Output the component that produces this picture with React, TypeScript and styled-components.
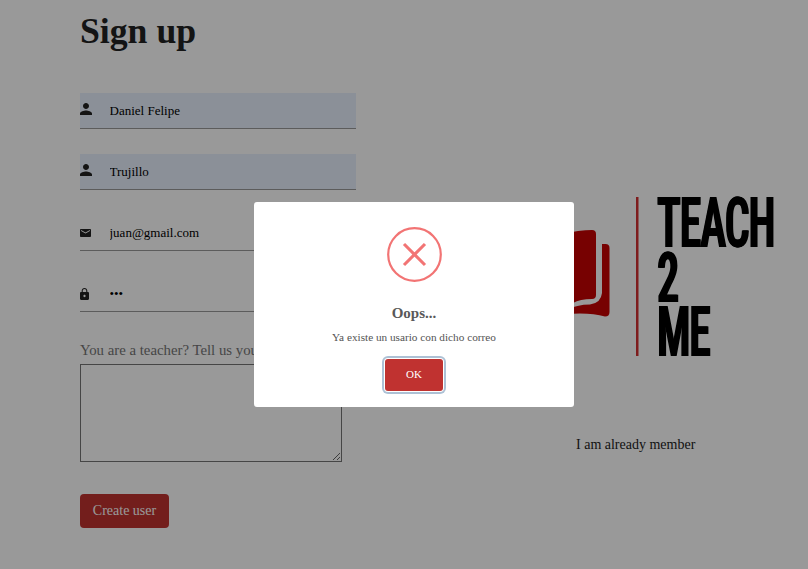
import React from "react";
import styled, { createGlobalStyle } from "styled-components";

const GlobalStyle = createGlobalStyle`
  *, *::before, *::after { box-sizing: border-box; }
  html, body, #root { height: 100%; }
  body {
    margin: 0;
    overflow: hidden;
    background: #fff;
    color: #222;
    font-family: "Liberation Serif", "Times New Roman", serif;
  }
`;

const Page = styled.main`
  display: flex;
  height: 100%;
  padding-left: 80px;
`;

const FormColumn = styled.form`
  width: 276px;
  flex: none;
  display: flex;
  flex-direction: column;
  align-items: flex-start;
`;

const Heading = styled.h1`
  margin: 0 0 31px;
  height: 62px;
  font-size: 35.7px;
  line-height: 62px;
`;

const Field = styled.label<{ $filled?: boolean }>`
  display: flex;
  align-items: center;
  width: 100%;
  height: 36px;
  margin-bottom: 25px;
  border-bottom: 1px solid #999;
  background: ${(p) => (p.$filled ? "#e8f0fe" : "transparent")};
`;

const FieldIcon = styled.span<{ $lift: number }>`
  display: flex;
  width: 29.5px;
  flex: none;
  padding-bottom: ${(p) => p.$lift}px;
`;

const FieldInput = styled.input`
  flex: 1;
  min-width: 0;
  padding: 0;
  border: 0;
  outline: 0;
  background: transparent;
  color: #000;
  font: 13px "Liberation Serif", "Times New Roman", serif;
`;

const AboutLabel = styled.label`
  height: 27px;
  color: #757575;
  font-size: 14.8px;
  line-height: 27px;
  white-space: nowrap;
`;

const AboutText = styled.textarea`
  display: block;
  width: 262px;
  height: 98px;
  margin: 0 0 32px;
  border: 1px solid #767676;
  border-radius: 0;
  background: transparent;
`;

const CreateButton = styled.button`
  width: 89px;
  height: 34px;
  padding: 0;
  border: 0;
  border-radius: 4px;
  background: #c03230;
  color: #fff;
  font: 14px "Liberation Serif", "Times New Roman", serif;
`;

const BrandColumn = styled.aside`
  display: flex;
  flex-direction: column;
  align-items: flex-start;
  padding: 196px 0 0 178px;
`;

const Logo = styled.div`
  display: flex;
  align-items: flex-start;
  height: 161px;
`;

const LogoMark = styled.svg`
  display: block;
  flex: none;
  margin-right: 17.5px;
`;

const Wordmark = styled.div`
  width: 117px;
  color: #000;
  font-family: Roboto, "Liberation Sans", sans-serif;
  font-weight: 600;
  font-stretch: 75%;
  font-size: 70px;
  line-height: 54.5px;
  letter-spacing: -2px;
`;

const Word = styled.div`
  width: max-content;
  height: 54.5px;
  transform: scaleX(0.632);
  transform-origin: 0 0;
  text-shadow: 1px 0 #000, -1px 0 #000;
`;

const MemberLink = styled.a`
  margin: 79px 0 0 42px;
  color: #222;
  font-size: 14px;
  line-height: 17px;
  white-space: nowrap;
`;

const Backdrop = styled.div`
  position: fixed;
  inset: 0;
  display: flex;
  align-items: flex-start;
  padding: 202px 0 0 254px;
  background: rgba(0, 0, 0, 0.4);
`;

const Dialog = styled.section`
  display: flex;
  flex-direction: column;
  align-items: center;
  width: 320px;
  height: 205px;
  padding-top: 25px;
  border-radius: 3px;
  background: #fff;
`;

const DialogTitle = styled.h2`
  margin: 21px 0 0;
  color: #595959;
  font-size: 15px;
  line-height: 20px;
`;

const DialogText = styled.p`
  margin: 5px 0 0;
  color: #545454;
  font-size: 11.25px;
  line-height: 18px;
`;

const OkButton = styled.button`
  width: 58px;
  height: 32px;
  margin-top: 13px;
  padding: 0 0 2px;
  border: 0;
  border-radius: 3px;
  background: #c03230;
  color: #fff;
  box-shadow: 0 0 0 1px #fff, 0 0 0 3px rgba(50, 100, 150, 0.4);
  font: 11px "Liberation Serif", "Times New Roman", serif;
`;

const PersonIcon = () => (
  <svg width="12" height="12" viewBox="4 4 16 16" fill="#222">
    <path d="M12 12c2.21 0 4-1.79 4-4s-1.79-4-4-4-4 1.79-4 4 1.79 4 4 4zm0 2c-2.67 0-8 1.34-8 4v2h16v-2c0-2.66-5.33-4-8-4z" />
  </svg>
);

const MailIcon = () => (
  <svg width="11" height="8" viewBox="2 4 20 16" preserveAspectRatio="none" fill="#222">
    <path d="M20 4H4c-1.1 0-2 .9-2 2v12c0 1.1.9 2 2 2h16c1.1 0 2-.9 2-2V6c0-1.1-.9-2-2-2zm0 4-8 5-8-5V6l8 5 8-5v2z" />
  </svg>
);

const LockIcon = () => (
  <svg width="9" height="12" viewBox="4 1 16 21" preserveAspectRatio="none" fill="#222">
    <path d="M18 8h-1V6c0-2.76-2.24-5-5-5S7 3.24 7 6v2H6c-1.1 0-2 .9-2 2v10c0 1.1.9 2 2 2h12c1.1 0 2-.9 2-2V10c0-1.1-.9-2-2-2zm-6 9c-1.1 0-2-.9-2-2s.9-2 2-2 2 .9 2 2-.9 2-2 2zm3.1-9H8.9V6c0-1.71 1.39-3.1 3.1-3.1s3.1 1.39 3.1 3.1v2z" />
  </svg>
);

const fields = [
  { name: "name", type: "text", value: "Daniel Felipe", icon: <PersonIcon />, lift: 3, filled: true },
  { name: "surname", type: "text", value: "Trujillo", icon: <PersonIcon />, lift: 3, filled: true },
  { name: "email", type: "email", value: "juan@gmail.com", icon: <MailIcon />, lift: 0, filled: false },
  { name: "secret", type: "text", value: "•••", icon: <LockIcon />, lift: 0, filled: false },
];

export default function App() {
  return (
    <>
      <GlobalStyle />
      <Page>
        <FormColumn>
          <Heading>Sign up</Heading>
          {fields.map((f) => (
            <Field key={f.name} $filled={f.filled}>
              <FieldIcon $lift={f.lift}>{f.icon}</FieldIcon>
              <FieldInput name={f.name} type={f.type} defaultValue={f.value} />
            </Field>
          ))}
          <AboutLabel>You are a teacher? Tell us your</AboutLabel>
          <AboutText />
          <CreateButton type="button">Create user</CreateButton>
        </FormColumn>
        <BrandColumn>
          <Logo>
            <LogoMark width="105" height="161" viewBox="534 196 105 161">
              <path d="M540 240Q565 233 578 231Q586 230 592 230Q596 230 596 234V295Q596 299 592 299Q580 299 573 303L540 310Z" fill="#c60303" />
              <path d="M602 244H605.5Q609.5 244 609.5 248V312Q609.5 316.5 605 316.5Q590 312 566 314V310Q577 304.5 590 304.5Q601 303 602 293Z" fill="#c60303" />
              <rect x="636" y="197" width="2.5" height="159" fill="#d32f31" />
            </LogoMark>
            <Wordmark>
              <Word>TEACH</Word>
              <Word>2</Word>
              <Word>ME</Word>
            </Wordmark>
          </Logo>
          <MemberLink>I am already member</MemberLink>
        </BrandColumn>
      </Page>
      <Backdrop>
        <Dialog role="alertdialog">
          <svg width="55" height="55" viewBox="0 0 55 55" fill="none" stroke="#f27474">
            <circle cx="27.5" cy="27.5" r="26.3" strokeWidth="2.2" />
            <path d="M17 17L38 38M38 17L17 38" strokeWidth="3.1" />
          </svg>
          <DialogTitle>Oops...</DialogTitle>
          <DialogText>Ya existe un usario con dicho correo</DialogText>
          <OkButton type="button">OK</OkButton>
        </Dialog>
      </Backdrop>
    </>
  );
}
